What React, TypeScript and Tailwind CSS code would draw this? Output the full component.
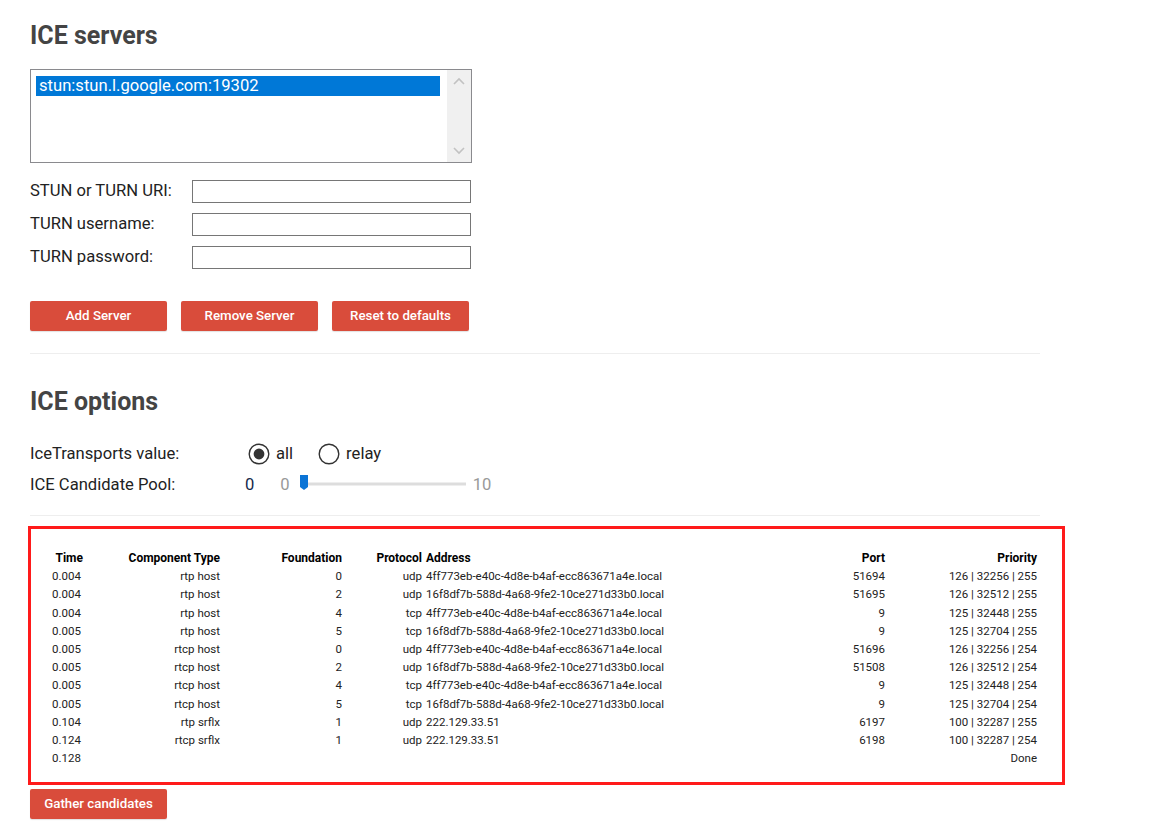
import React from "react";

const rows = [
  ["0.004", "rtp host", "0", "udp", "4ff773eb-e40c-4d8e-b4af-ecc863671a4e.local", "51694", "126 | 32256 | 255"],
  ["0.004", "rtp host", "2", "udp", "16f8df7b-588d-4a68-9fe2-10ce271d33b0.local", "51695", "126 | 32512 | 255"],
  ["0.004", "rtp host", "4", "tcp", "4ff773eb-e40c-4d8e-b4af-ecc863671a4e.local", "9", "125 | 32448 | 255"],
  ["0.005", "rtp host", "5", "tcp", "16f8df7b-588d-4a68-9fe2-10ce271d33b0.local", "9", "125 | 32704 | 255"],
  ["0.005", "rtcp host", "0", "udp", "4ff773eb-e40c-4d8e-b4af-ecc863671a4e.local", "51696", "126 | 32256 | 254"],
  ["0.005", "rtcp host", "2", "udp", "16f8df7b-588d-4a68-9fe2-10ce271d33b0.local", "51508", "126 | 32512 | 254"],
  ["0.005", "rtcp host", "4", "tcp", "4ff773eb-e40c-4d8e-b4af-ecc863671a4e.local", "9", "125 | 32448 | 254"],
  ["0.005", "rtcp host", "5", "tcp", "16f8df7b-588d-4a68-9fe2-10ce271d33b0.local", "9", "125 | 32704 | 254"],
  ["0.104", "rtp srflx", "1", "udp", "222.129.33.51", "6197", "100 | 32287 | 255"],
  ["0.124", "rtcp srflx", "1", "udp", "222.129.33.51", "6198", "100 | 32287 | 254"],
  ["0.128", "", "", "", "", "", "Done"],
];

const headers = ["Time", "Component Type", "Foundation", "Protocol", "Address", "Port", "Priority"];

function Radio({ checked }: { checked?: boolean }) {
  return (
    <svg width="22" height="22" viewBox="0 0 22 22">
      <circle cx="11" cy="11" r="9.8" fill="white" stroke="#333" strokeWidth="1.4" />
      {checked && <circle cx="11" cy="11" r="5.4" fill="#333" />}
    </svg>
  );
}

function Field({ label }: { label: string }) {
  return (
    <div className="flex items-center h-[23px]">
      <label className="w-[162px] shrink-0">{label}</label>
      <input className="w-[279px] h-[23px] border border-[#767676] bg-white outline-none" />
    </div>
  );
}

function RedButton({ children, className = "" }: { children: React.ReactNode; className?: string }) {
  return (
    <button
      className={`h-[30px] w-[137px] rounded-[2px] bg-[#d94c3b] text-white text-[13.3px] font-medium shadow-[0_1px_1px_rgba(0,0,0,0.12)] ${className}`}
    >
      {children}
    </button>
  );
}

export default function App() {
  return (
    <div className="min-h-screen bg-white text-[#222] font-['Roboto',sans-serif] font-normal text-[16.6px] px-[30px]">
      <div className="w-[1010px]">
        <h2 className="pt-[22px] text-[25px] leading-[28px] font-bold text-[#444]">ICE servers</h2>

        <div className="mt-[19px] w-[442px] h-[94px] border border-[#8a8a8e] flex">
          <div className="flex-1 pl-[5px] pt-[6px]">
            <div className="bg-[#0078d7] text-white h-[20px] leading-[20px] pl-[3px] w-[404px]">
              stun:stun.l.google.com:19302
            </div>
          </div>
          <div className="w-[24px] bg-[#f0f0f0] flex flex-col justify-between items-center py-[7px]">
            <svg width="12" height="8" viewBox="0 0 12 8">
              <path d="M1 7 L6 2 L11 7" fill="none" stroke="#c2c2c2" strokeWidth="1.6" />
            </svg>
            <svg width="12" height="8" viewBox="0 0 12 8">
              <path d="M1 1 L6 6 L11 1" fill="none" stroke="#c2c2c2" strokeWidth="1.6" />
            </svg>
          </div>
        </div>

        <div className="mt-[17px] flex flex-col gap-[10px] w-[441px]">
          <Field label="STUN or TURN URI:" />
          <Field label="TURN username:" />
          <Field label="TURN password:" />
        </div>

        <div className="mt-[32px] flex gap-[14px]">
          <RedButton>Add Server</RedButton>
          <RedButton>Remove Server</RedButton>
          <RedButton className="w-[136px]">Reset to defaults</RedButton>
        </div>

        <hr className="mt-[22px] border-0 border-t border-[#eee]" />

        <h2 className="mt-[34px] text-[25px] leading-[28px] font-bold text-[#444]">ICE options</h2>

        <div className="mt-[25px] flex items-center h-[26px]">
          <span className="w-[218px] shrink-0">IceTransports value:</span>
          <Radio checked />
          <span className="ml-[6px]">all</span>
          <span className="ml-[25px]"><Radio /></span>
          <span className="ml-[6px]">relay</span>
        </div>

        <div className="mt-[5px] flex items-center h-[26px]">
          <span className="w-[215px] shrink-0">ICE Candidate Pool:</span>
          <span className="text-[#15284b]">0</span>
          <span className="ml-[26px] text-[#999]">0</span>
          <svg width="176" height="24" viewBox="0 0 176 24" className="ml-[6px]">
            <rect x="8" y="9.5" width="162" height="3" fill="#ddd" />
            <path d="M4 2 H12 V14 L8 17 L4 14 Z" fill="#0b74d6" />
          </svg>
          <span className="ml-[1px] text-[#999]">10</span>
        </div>

        <hr className="mt-[17px] border-0 border-t border-[#eee]" />
      </div>

      <div className="mt-[10px] -ml-[2px] w-[1037px] border-[3px] border-[#ff1a1a] pl-[21px] pt-[20px] pb-[15px] text-[11.5px] leading-[18.2px] text-[#222]">
        <div className="grid grid-cols-[31px_133px_118px_76px_414px_41px_148px] gap-x-[4px]">
          {headers.map((h, i) => (
            <div key={h} className={`font-bold text-[12px] text-black whitespace-nowrap ${i === 4 ? "text-left" : "text-right"}`}>
              {h}
            </div>
          ))}
          {rows.map((r, ri) =>
            r.map((c, ci) => (
              <div
                key={ri + "-" + ci}
                className={`whitespace-nowrap ${ci === 4 || ci === 0 ? "text-left" : "text-right"}`}
              >
                {c}
              </div>
            ))
          )}
        </div>
      </div>

      <div className="mt-[4px] flex pb-[20px]">
        <RedButton>Gather candidates</RedButton>
      </div>
    </div>
  );
}
